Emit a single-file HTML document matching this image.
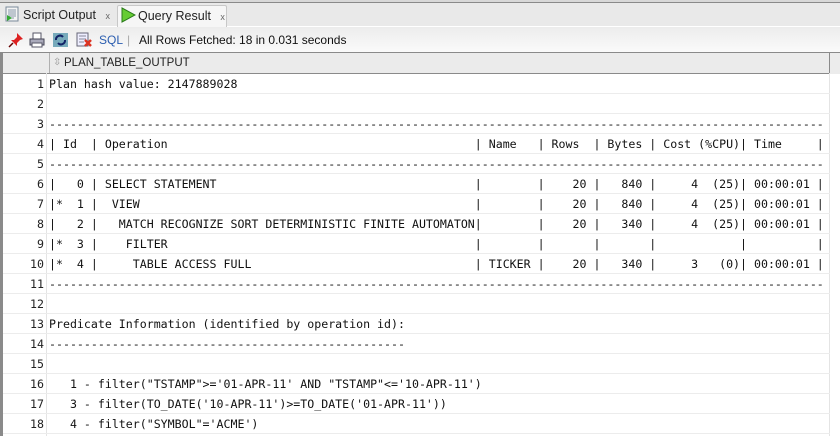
<!DOCTYPE html>
<html><head><meta charset="utf-8"><style>
*{margin:0;padding:0;box-sizing:border-box}
body{width:840px;height:436px;overflow:hidden;background:#fff;font-family:"Liberation Sans",sans-serif;position:relative}
.top{position:absolute;left:0;top:0;width:840px;height:3px;background:#d8d8d8;border-bottom:1px solid #8a8a8a}
.tabs{position:absolute;left:0;top:3px;width:840px;height:24px;background:#e9e9e9;border-bottom:1px solid #fff}
.tab{position:absolute;top:2px;height:22px;font-size:12.5px;color:#222;line-height:21px}
.t1{left:4px;width:112px}
.t2{left:117px;width:110px;background:#f6f6f6;border:1px solid #c8c8c8;border-bottom:none;border-radius:2px 2px 0 0}
.x{font-size:9px;color:#666;margin-left:6px}
.tb{position:absolute;left:0;top:27px;width:840px;height:26px;background:linear-gradient(#ececec,#fafafa);border-bottom:1px solid #8a8a8a}
.tb span{position:absolute;top:6px;font-size:12px}
.grid{position:absolute;left:0;top:53px;width:840px;height:383px}
.lb{position:absolute;left:0;top:53px;width:3px;height:383px;background:#8a8a8a}
.hdr{position:absolute;left:3px;top:0;width:827px;height:21px;background:#ebebeb;border-bottom:1px solid #8a8a8a;border-right:1px solid #8a8a8a}
.hdr .g{position:absolute;left:0;top:0;width:46px;height:20px}
.hdr .c{position:absolute;left:46px;top:0;height:20px;border-left:1px solid #b0b0b0;font-size:11.5px;line-height:20px;padding-left:14px;color:#222}
.sb{position:absolute;left:830px;top:0;width:10px;height:21px;background:#ececec}
.row{position:absolute;left:3px;width:827px;height:20px;border-bottom:1px solid #ececec}
.n{position:absolute;left:0;width:41px;text-align:right;font:11.6px "DejaVu Sans Mono",monospace;line-height:20px;color:#222}
.v{position:absolute;left:46px;font:11.6px "DejaVu Sans Mono",monospace;line-height:20px;white-space:pre;color:#111}
.gl{position:absolute;left:46px;top:73px;width:1px;height:363px;background:#e4e4e4}
.rl{position:absolute;left:829px;top:73px;width:1px;height:363px;background:#e4e4e4}
</style></head><body>
<div class="top"></div>
<div class="tabs">
 <div class="tab t1"><svg width="16" height="16" style="vertical-align:-3px;margin-right:3px" viewBox="0 0 16 16"><rect x="2" y="1" width="12" height="14" fill="#f4f4f4" stroke="#7a8a9a"/><path d="M4 4h8M4 6h8M4 8h8M4 10h8M4 12h6" stroke="#8899aa"/><path d="M3 9l5 3-5 3z" fill="#3a3"/></svg>Script Output <span class="x">x</span></div>
 <div class="tab t2"><svg width="16" height="16" style="vertical-align:-3px;margin:0 2px 0 2px" viewBox="0 0 16 16"><path d="M2 1l13 7-13 7z" fill="#6c3" stroke="#2a7a1a"/></svg>Query Result <span class="x">x</span></div>
</div>
<div class="tb">
 <svg style="position:absolute;left:8px;top:5px" width="16" height="16" viewBox="0 0 16 16"><path d="M9 1l6 6-3 1-3 3 0 3-6-6 3 0 3-3z" fill="#d22"/><path d="M5 11l-4 4" stroke="#600" stroke-width="1.5"/></svg>
 <svg style="position:absolute;left:29px;top:5px" width="16" height="16" viewBox="0 0 16 16"><rect x="4" y="1" width="8" height="6" fill="#fff" stroke="#556"/><rect x="1" y="7" width="14" height="6" fill="#aab" stroke="#445"/><rect x="3" y="11" width="10" height="4" fill="#fff" stroke="#556"/></svg>
 <svg style="position:absolute;left:52px;top:5px" width="17" height="16" viewBox="0 0 17 16"><rect x="1" y="1" width="15" height="14" fill="#7ab" /><path d="M4 8a4 4 0 0 1 7-3M13 8a4 4 0 0 1-7 3" stroke="#126" stroke-width="2" fill="none"/></svg>
 <svg style="position:absolute;left:76px;top:5px" width="17" height="16" viewBox="0 0 17 16"><rect x="1" y="1" width="11" height="13" fill="#eef" stroke="#667"/><path d="M3 4h7M3 7h7M3 10h5" stroke="#889"/><path d="M9 8l6 6M15 8l-6 6" stroke="#d32" stroke-width="2.5"/></svg>
 <span style="left:99px;color:#2a5db0">SQL</span>
 <span style="left:127px;color:#aaa">|</span>
 <span style="left:139px;color:#111">All Rows Fetched: 18 in 0.031 seconds</span>
</div>
<div class="lb"></div>
<div class="grid">
 <div class="hdr"><div class="g"></div><div class="c"><span style="position:absolute;left:3px;color:#999;font-size:10px">⇳</span>PLAN_TABLE_OUTPUT</div></div>
 <div class="sb"></div>
</div>
<div class="gl"></div><div class="rl"></div>
<div class="row" style="top:74px"><div class="n">1</div><div class="v">Plan hash value: 2147889028</div></div>
<div class="row" style="top:94px"><div class="n">2</div><div class="v"></div></div>
<div class="row" style="top:114px"><div class="n">3</div><div class="v">---------------------------------------------------------------------------------------------------------------</div></div>
<div class="row" style="top:134px"><div class="n">4</div><div class="v">| Id  | Operation                                            | Name   | Rows  | Bytes | Cost (%CPU)| Time     |</div></div>
<div class="row" style="top:154px"><div class="n">5</div><div class="v">---------------------------------------------------------------------------------------------------------------</div></div>
<div class="row" style="top:174px"><div class="n">6</div><div class="v">|   0 | SELECT STATEMENT                                     |        |    20 |   840 |     4  (25)| 00:00:01 |</div></div>
<div class="row" style="top:194px"><div class="n">7</div><div class="v">|*  1 |  VIEW                                                |        |    20 |   840 |     4  (25)| 00:00:01 |</div></div>
<div class="row" style="top:214px"><div class="n">8</div><div class="v">|   2 |   MATCH RECOGNIZE SORT DETERMINISTIC FINITE AUTOMATON|        |    20 |   340 |     4  (25)| 00:00:01 |</div></div>
<div class="row" style="top:234px"><div class="n">9</div><div class="v">|*  3 |    FILTER                                            |        |       |       |            |          |</div></div>
<div class="row" style="top:254px"><div class="n">10</div><div class="v">|*  4 |     TABLE ACCESS FULL                                | TICKER |    20 |   340 |     3   (0)| 00:00:01 |</div></div>
<div class="row" style="top:274px"><div class="n">11</div><div class="v">---------------------------------------------------------------------------------------------------------------</div></div>
<div class="row" style="top:294px"><div class="n">12</div><div class="v"></div></div>
<div class="row" style="top:314px"><div class="n">13</div><div class="v">Predicate Information (identified by operation id):</div></div>
<div class="row" style="top:334px"><div class="n">14</div><div class="v">---------------------------------------------------</div></div>
<div class="row" style="top:354px"><div class="n">15</div><div class="v"></div></div>
<div class="row" style="top:374px"><div class="n">16</div><div class="v">   1 - filter("TSTAMP"&gt;='01-APR-11' AND "TSTAMP"&lt;='10-APR-11')</div></div>
<div class="row" style="top:394px"><div class="n">17</div><div class="v">   3 - filter(TO_DATE('10-APR-11')&gt;=TO_DATE('01-APR-11'))</div></div>
<div class="row" style="top:414px"><div class="n">18</div><div class="v">   4 - filter("SYMBOL"='ACME')</div></div>
</body></html>
